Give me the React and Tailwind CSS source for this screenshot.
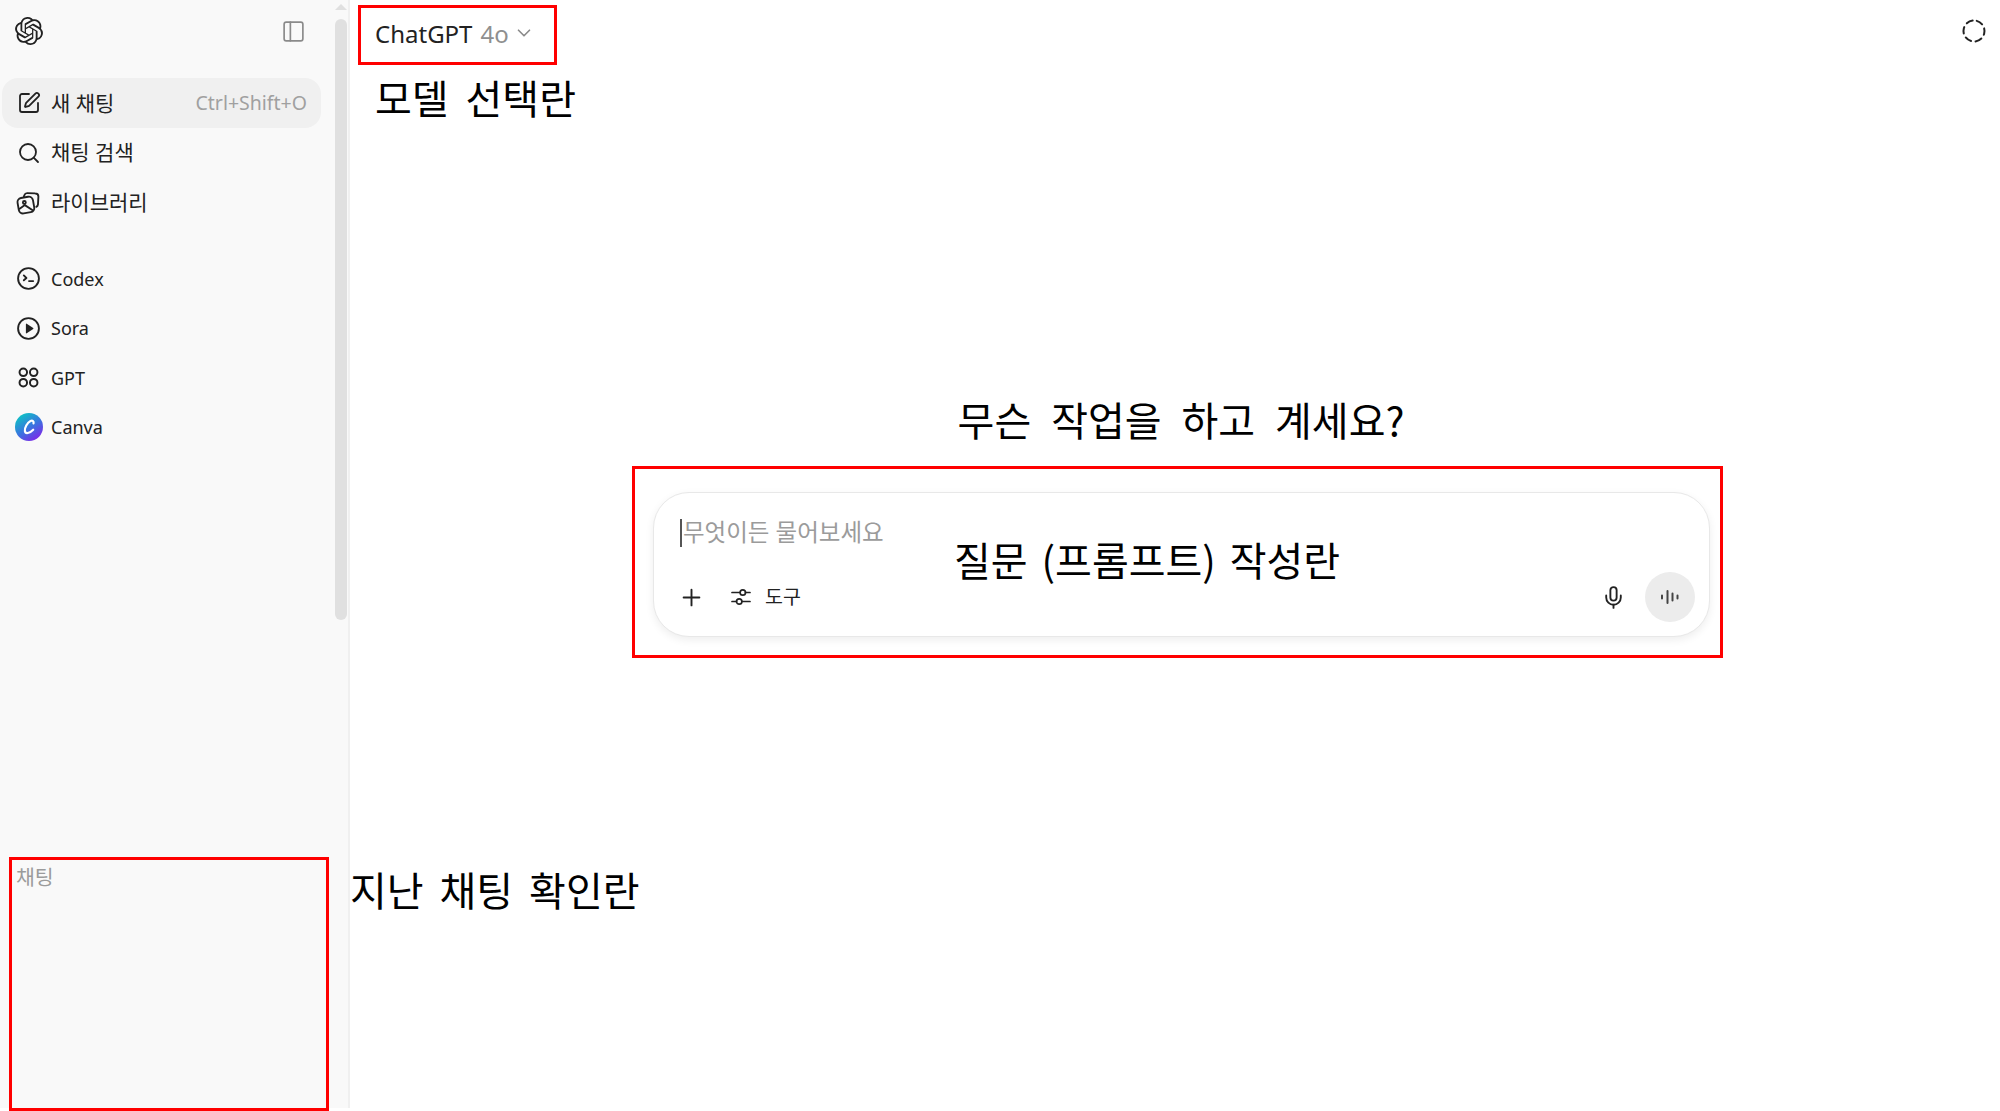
import { ChevronDown, Mic, PanelLeft, Plus, Search, SquarePen } from "lucide-react";
import { SiOpenai } from "react-icons/si";

const fontStack = "font-['Noto_Sans','Noto_Sans_CJK_KR',sans-serif]";
const annotation = "font-['Noto_Sans_CJK_KR','Noto_Sans',sans-serif] text-[40px] leading-none text-black whitespace-nowrap";

function LibraryIcon() {
  return (
    <svg width="25" height="25" viewBox="0 0 24 24" fill="none" stroke="currentColor" strokeWidth="1.8" strokeLinecap="round" strokeLinejoin="round">
      <rect x="2" y="7" width="15" height="15" rx="4" transform="rotate(-10 9.5 14.5)" />
      <path d="M7.5 6.5 8 5a3 3 0 0 1 3-2l7.5.3a3 3 0 0 1 3 3l-.4 7.5a3 3 0 0 1-1.6 2.4" />
      <circle cx="8" cy="12" r="1.4" />
      <path d="m3.5 18 5-3.5 7.5 5" />
    </svg>
  );
}

function CodexIcon() {
  return (
    <svg width="25" height="25" viewBox="0 0 24 24" fill="none" stroke="currentColor" strokeWidth="1.8" strokeLinecap="round" strokeLinejoin="round">
      <circle cx="12" cy="12" r="10" />
      <path d="m7.5 9 2.5 2.5-2.5 2.2" />
      <path d="M12.5 14.5h4" />
    </svg>
  );
}

function SoraIcon() {
  return (
    <svg width="25" height="25" viewBox="0 0 24 24" fill="none" stroke="currentColor" strokeWidth="1.8">
      <circle cx="12" cy="12" r="10" />
      <path d="M9.5 7.8v8.4a.5.5 0 0 0 .8.4l6.2-4.2a.5.5 0 0 0 0-.8l-6.2-4.2a.5.5 0 0 0-.8.4z" fill="currentColor" stroke="none" />
    </svg>
  );
}

function GptIcon() {
  return (
    <svg width="25" height="25" viewBox="0 0 24 24" fill="none" stroke="currentColor" strokeWidth="1.9">
      <circle cx="7" cy="7" r="3.6" />
      <circle cx="17" cy="7" r="3.6" />
      <circle cx="7" cy="17" r="3.6" />
      <circle cx="17" cy="17" r="3.6" />
    </svg>
  );
}

function CanvaIcon() {
  return (
    <svg width="28" height="28" viewBox="0 0 28 28" fill="none" className="shrink-0">
      <defs>
        <linearGradient id="canva" x1="0.1" y1="0.1" x2="0.7" y2="1">
          <stop offset="0" stopColor="#0cc4c4" />
          <stop offset="0.55" stopColor="#3b72e0" />
          <stop offset="1" stopColor="#7d2ae8" />
        </linearGradient>
      </defs>
      <circle cx="14" cy="14" r="14" fill="url(#canva)" />
      <path d="M18.5 10.5c.6-2.2-1-3.4-3-2.4-3.2 1.6-6.2 6.8-5.6 10 .5 2.9 4.5 2.6 8.3-1.4" stroke="#fff" strokeWidth="2.2" strokeLinecap="round" />
    </svg>
  );
}

function SlidersIcon() {
  return (
    <svg width="22" height="22" viewBox="0 0 22 22" fill="none" stroke="#222" strokeWidth="1.7" strokeLinecap="round">
      <path d="M2 6.5h8M15.5 6.5H20M2 15.5h4.5M12 15.5h8" />
      <circle cx="12.8" cy="6.5" r="2.7" />
      <circle cx="9.2" cy="15.5" r="2.7" />
    </svg>
  );
}

function VoiceIcon() {
  return (
    <svg width="22" height="22" viewBox="0 0 22 22" fill="none" stroke="#444" strokeWidth="2" strokeLinecap="round">
      <path d="M3 9.5v3M8.5 5v12M13.5 7.5v7M18.5 9.5v3" />
    </svg>
  );
}

function DashedCircle() {
  return (
    <svg width="26" height="26" viewBox="0 0 26 26" fill="none" stroke="#222" strokeWidth="2" strokeLinecap="round" className="mt-[13px]">
      <circle cx="13" cy="13" r="10.5" strokeDasharray="6.5 4.5" transform="rotate(-75 13 13)" />
    </svg>
  );
}

function NavItem({ icon, label, hint, active, latin }) {
  return (
    <div className={`flex items-center pl-[14px] pr-[14px] rounded-[16px] text-[#222] ${active ? "bg-[#f0f0f0] h-[50px]" : "h-[49.5px]"}`}>
      <span className="w-[25px] h-[25px] flex items-center justify-center shrink-0">{icon}</span>
      <span className={`ml-[10px] leading-none ${latin ? "text-[18px]" : "text-[21px]"}`}>{label}</span>
      {hint && <span className="ml-auto text-[19.5px] leading-none text-[#a0a0a0]">{hint}</span>}
    </div>
  );
}

export default function App() {
  return (
    <div className={`relative flex w-[2000px] h-[1111px] overflow-hidden bg-white ${fontStack}`}>
      {/* Sidebar */}
      <aside className="flex w-[350px] h-[1108px] shrink-0 bg-[#f9f9f9] border-r-2 border-[#f0f0f0]">
        <div className="flex flex-col w-[334px] min-w-0">
          <div className="flex items-center justify-between h-[62px] pl-[15px] pr-[28px]">
            <SiOpenai size={28} className="text-[#222]" />
            <PanelLeft size={25} strokeWidth={1.6} className="text-[#8a8a8a]" />
          </div>
          <nav className="flex flex-col pl-[2px] pr-[13px] mt-[16px]">
            <NavItem active icon={<SquarePen size={24} strokeWidth={1.8} />} label="새 채팅" hint="Ctrl+Shift+O" />
            <NavItem icon={<Search size={24} strokeWidth={1.8} />} label="채팅 검색" />
            <NavItem icon={<LibraryIcon />} label="라이브러리" />
          </nav>
          <nav className="flex flex-col pl-[2px] pr-[13px] mt-[27px]">
            <NavItem latin icon={<CodexIcon />} label="Codex" />
            <NavItem latin icon={<SoraIcon />} label="Sora" />
            <NavItem latin icon={<GptIcon />} label="GPT" />
            <NavItem latin icon={<CanvaIcon />} label="Canva" />
          </nav>
          <section className="relative mt-auto ml-[9px] w-[320px] h-[254px] -mb-[3px] border-[3px] border-[#ff0000] pl-[4px] pt-[5px] text-[20.5px] leading-[24px] text-[#9b9b9b]">
            채팅
          </section>
        </div>
        {/* Scrollbar */}
        <div className="flex flex-col items-center w-[14px] pt-[4px]">
          <div className="w-0 h-0 border-x-[6px] border-x-transparent border-b-[6px] border-b-[#e0e0e0]" />
          <div className="w-[12px] h-[601px] mt-[9px] rounded-full bg-[#e0e0e0]" />
        </div>
      </aside>

      {/* Main */}
      <main className="relative flex flex-col flex-1 min-w-0">
        <header className="flex items-start justify-between pt-[5px] pl-[8px] pr-[13px]">
          <button className="flex items-center w-[199px] h-[60px] border-[3px] border-[#ff0000] pl-[14px] pb-[2px] text-[24px] leading-none text-[#222]">
            ChatGPT
            <span className="ml-[8px] text-[#8f8f8f]">4o</span>
            <ChevronDown size={22} strokeWidth={1.8} className="ml-[4px] -mt-[3px] text-[#8a8a8a]" />
          </button>
          <DashedCircle />
        </header>
        <p className={`ml-[25px] mt-[12px] [word-spacing:8px] ${annotation}`}>모델 선택란</p>

        <h1 className={`mt-[282px] text-center pl-[12px] [word-spacing:11px] ${annotation}`}>무슨 작업을 하고 계세요?</h1>

        <div className="self-center w-[1091px] h-[192px] mt-[27px] ml-[5px] border-[3px] border-[#ff0000] pl-[18px] pr-[10px] pt-[23px]">
          <div className="relative flex flex-col h-[145px] rounded-[36px] border border-[#e8e8e8] bg-white shadow-[0_3px_8px_rgba(0,0,0,0.07)] pl-[26px] pr-[14px]">
            <div className="flex items-center h-[26px] mt-[27px] text-[23.5px] leading-none text-[#9b9b9b]">
              <span className="w-[2px] h-[28px] bg-[#555] mr-[1px]" />
              무엇이든 물어보세요
            </div>
            <div className="flex items-center mt-auto mb-[14px]">
              <Plus size={27} strokeWidth={1.7} className="-ml-[2px] text-[#222]" />
              <span className="ml-[25px]"><SlidersIcon /></span>
              <span className="ml-[13px] text-[19.5px] leading-none text-[#222]">도구</span>
              <Mic size={25} strokeWidth={1.8} className="ml-auto mr-[19px] text-[#222]" />
              <span className="flex items-center justify-center w-[50px] h-[50px] rounded-full bg-[#ececec]">
                <VoiceIcon />
              </span>
            </div>
            {/* label typed over the composer */}
            <span className={`absolute left-[300px] top-[46px] [word-spacing:5px] ${annotation}`}>질문 (프롬프트) 작성란</span>
          </div>
        </div>

        <span className={`absolute left-[0px] top-[869px] [word-spacing:7px] ${annotation}`}>지난 채팅 확인란</span>
      </main>
    </div>
  );
}
